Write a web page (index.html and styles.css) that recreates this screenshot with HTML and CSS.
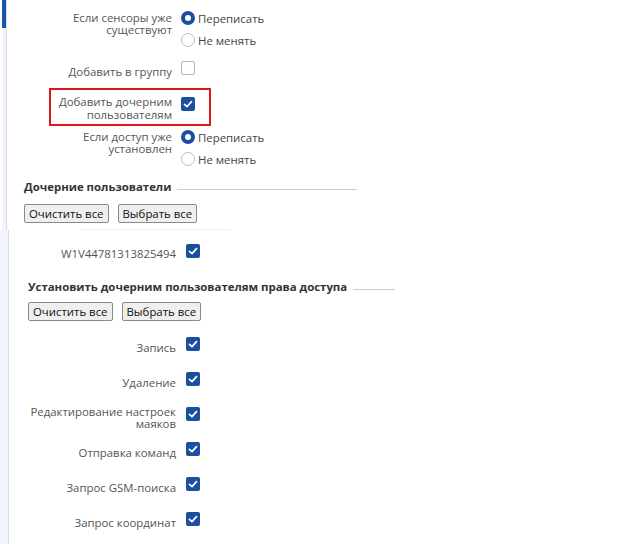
FILE: index.html
```html
<!DOCTYPE html>
<html lang="ru">
<head>
    <meta charset="UTF-8">
    <meta name="viewport" content="width=device-width, initial-scale=1.0">
    <title>Права дочерних пользователей</title>
    <link rel="stylesheet" href="styles.css">
</head>
<body>

    <!-- Import options -->
    <div class="part part-top">
        <div class="strip"><div class="strip-active"></div></div>
        <div class="content">

            <div class="field">
                <div class="label">Если сенсоры уже<br>существуют</div>
                <div class="radio-group">
                    <label class="option"><span class="radio checked"></span>Переписать</label>
                    <label class="option"><span class="radio"></span>Не менять</label>
                </div>
            </div>

            <div class="field check-row">
                <div class="label">Добавить в группу</div>
                <span class="checkbox"></span>
            </div>

            <div class="highlight">
                <div class="field check-row">
                    <div class="label">Добавить дочерним<br>пользователям</div>
                    <span class="checkbox checked"><svg viewBox="0 0 14 14"><polyline points="3.5,7.3 6,9.6 10.5,4.6"/></svg></span>
                </div>
            </div>

            <div class="field field-access">
                <div class="label">Если доступ уже<br>установлен</div>
                <div class="radio-group">
                    <label class="option"><span class="radio checked"></span>Переписать</label>
                    <label class="option"><span class="radio"></span>Не менять</label>
                </div>
            </div>

            <h3 class="section-title title-users">Дочерние пользователи</h3>
            <div class="buttons">
                <button>Очистить все</button>
                <button>Выбрать все</button>
            </div>
            <div class="seam"></div>
        </div>
    </div>

    <!-- Child users and rights -->
    <div class="part part-bottom">
        <div class="strip"></div>
        <div class="content">

            <div class="field check-row user-row">
                <div class="label">W1V44781313825494</div>
                <span class="checkbox checked"><svg viewBox="0 0 14 14"><polyline points="3.5,7.3 6,9.6 10.5,4.6"/></svg></span>
            </div>

            <h3 class="section-title title-rights">Установить дочерним пользователям права доступа</h3>
            <div class="buttons buttons-rights">
                <button>Очистить все</button>
                <button>Выбрать все</button>
            </div>

            <div class="rights">
                <div class="field right-row">
                    <div class="label">Запись</div>
                    <span class="checkbox checked"><svg viewBox="0 0 14 14"><polyline points="3.5,7.3 6,9.6 10.5,4.6"/></svg></span>
                </div>
                <div class="field right-row">
                    <div class="label">Удаление</div>
                    <span class="checkbox checked"><svg viewBox="0 0 14 14"><polyline points="3.5,7.3 6,9.6 10.5,4.6"/></svg></span>
                </div>
                <div class="field right-row">
                    <div class="label">Редактирование настроек<br>маяков</div>
                    <span class="checkbox checked"><svg viewBox="0 0 14 14"><polyline points="3.5,7.3 6,9.6 10.5,4.6"/></svg></span>
                </div>
                <div class="field right-row">
                    <div class="label">Отправка команд</div>
                    <span class="checkbox checked"><svg viewBox="0 0 14 14"><polyline points="3.5,7.3 6,9.6 10.5,4.6"/></svg></span>
                </div>
                <div class="field right-row">
                    <div class="label">Запрос GSM-поиска</div>
                    <span class="checkbox checked"><svg viewBox="0 0 14 14"><polyline points="3.5,7.3 6,9.6 10.5,4.6"/></svg></span>
                </div>
                <div class="field right-row">
                    <div class="label">Запрос координат</div>
                    <span class="checkbox checked"><svg viewBox="0 0 14 14"><polyline points="3.5,7.3 6,9.6 10.5,4.6"/></svg></span>
                </div>
            </div>
        </div>
    </div>

</body>
</html>
```

FILE: styles.css
```css
body {
    margin: 0;
    font-family: "Open Sans", "Liberation Sans", sans-serif;
    font-size: 11.4px;
    color: #555;
    background-color: #fff;
}

.part {
    display: flex;
}

.part-top {
    height: 230px;
}

.part-bottom {
    height: 314px;
}

.content {
    flex: 1;
}

/* left navigation strip */
.strip {
    box-sizing: border-box;
    background-color: #f1f5fb;
    border-right: 1px solid #d3dbe7;
}

.part-top .strip {
    width: 5px;
    margin-left: 2px;
}

.part-bottom .strip {
    width: 9px;
}

.strip-active {
    width: 4px;
    height: 28px;
    background-color: #1b56a8;
}

.field {
    display: grid;
    align-items: start;
}

.part-top .field {
    grid-template-columns: 165px auto;
    column-gap: 9px;
    margin-right: auto;
}

.part-top .field:first-child {
    margin-top: 11px;
}

.part-bottom .field {
    grid-template-columns: 167px auto;
    column-gap: 10px;
}

.label {
    text-align: right;
    line-height: 12px;
    padding-top: 1px;
}

.radio-group {
    display: flex;
    flex-direction: column;
    gap: 8px;
}

.option {
    display: flex;
    align-items: center;
    height: 14px;
    color: #444;
}

.radio {
    box-sizing: border-box;
    width: 14px;
    height: 14px;
    margin-right: 3px;
    border: 1px solid #b9c0cb;
    border-radius: 50%;
    background-color: #fff;
}

.radio.checked {
    border: 4.5px solid #1a4f9f;
}

.checkbox {
    box-sizing: border-box;
    display: block;
    width: 14px;
    height: 14px;
    margin-bottom: 8px;
    border: 1px solid #b7b7b7;
    border-radius: 2px;
    background-color: #fff;
}

.checkbox.checked {
    border: none;
    background-color: #1b4fa0;
}

.checkbox svg {
    display: block;
    width: 14px;
    height: 14px;
}

.checkbox polyline {
    fill: none;
    stroke: #fff;
    stroke-width: 1.7;
    stroke-linecap: round;
    stroke-linejoin: round;
}

.check-row {
    align-items: center;
    height: 24px;
}

.check-row .label {
    padding-top: 0;
}

.part-top .check-row {
    margin-top: 13px;
}

.highlight {
    box-sizing: border-box;
    width: 162px;
    margin-left: 42px;
    margin-top: 4px;
    padding: 5px 0 5px 0;
    border: 2px solid #e0141b;
}

.part-top .highlight .field {
    grid-template-columns: 121px auto;
    margin-top: 0;
}

.highlight .label {
    line-height: 13px;
}

.field-access {
    margin-top: 4px;
}

.section-title {
    display: flex;
    align-items: center;
    margin: 0;
    font-size: 11.4px;
    line-height: 16px;
    font-weight: bold;
    color: #333;
}

.section-title::after {
    content: "";
    flex: 1;
    height: 1px;
    margin-left: 6px;
    margin-top: 4px;
    background-color: #c9ced6;
}

.title-users {
    width: 333px;
    margin: 13px 0 0 17px;
}

.title-rights {
    width: 367px;
    margin: 13px 0 0 19px;
}

.buttons {
    display: flex;
    gap: 9px;
    margin-top: 9px;
}

.part-top .buttons {
    margin-left: 17px;
}

.part-bottom .buttons {
    margin-left: 19px;
}

.buttons-rights {
    margin-top: 7px;
}

button {
    height: 19px;
    padding: 0 4px;
    font-family: "Open Sans", "Liberation Sans", sans-serif;
    font-size: 11.4px;
    color: #111;
    background-color: #efefef;
    border: 1px solid #8a8a8a;
    border-radius: 2px;
}

.seam {
    width: 151px;
    height: 1px;
    margin: 6px 0 0 73px;
    background-color: #eef0f3;
}

.part-bottom .user-row {
    margin-top: 12px;
}

.user-row .checkbox {
    margin-bottom: 6px;
}

.rights {
    margin-top: 9px;
}

.part-bottom .right-row {
    height: 35px;
    align-items: center;
}

.right-row .label {
    padding-top: 0;
}
```
